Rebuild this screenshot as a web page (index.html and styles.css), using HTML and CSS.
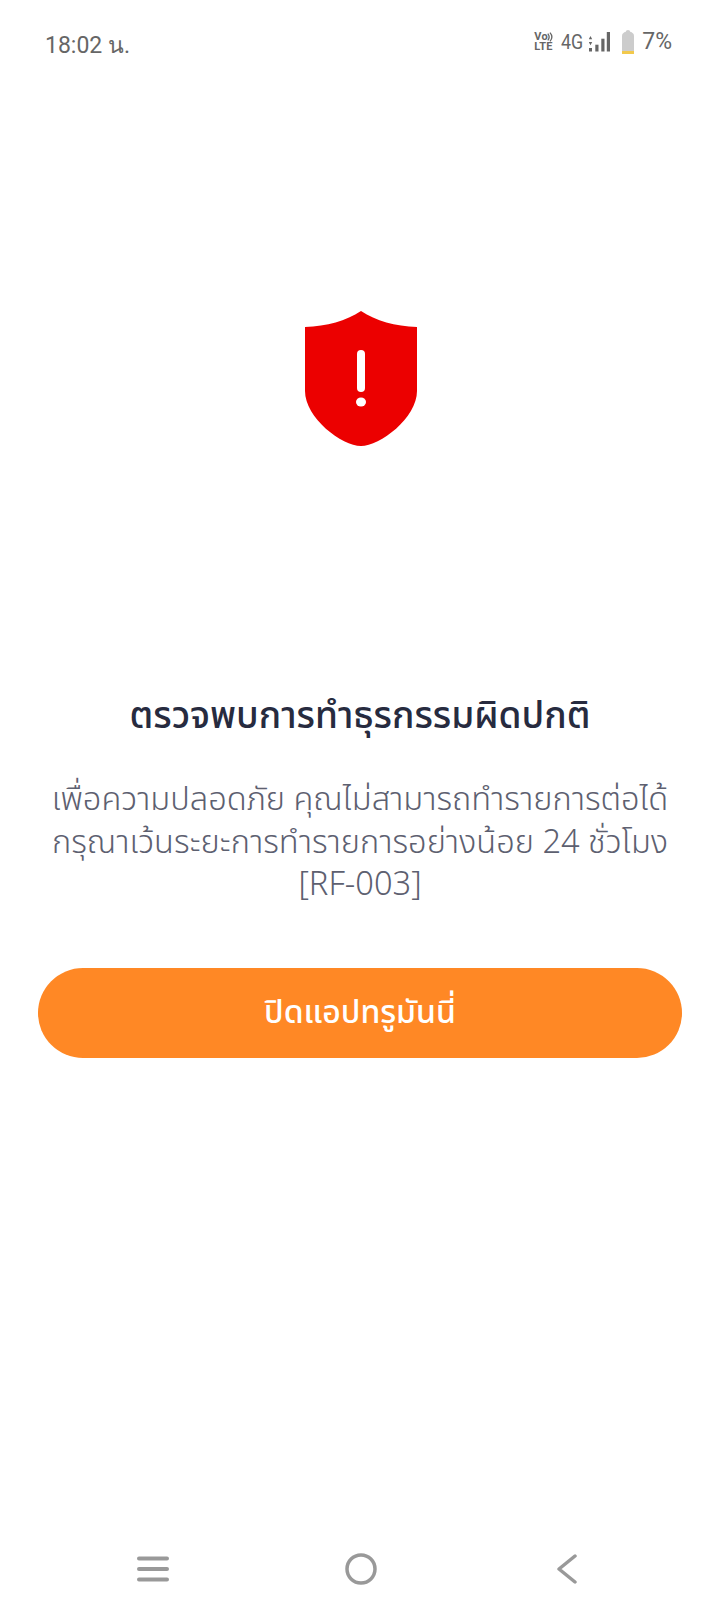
FILE: index.html
```html
<!DOCTYPE html>
<html lang="th">
<head>
<meta charset="utf-8">
<title>ตรวจพบการทำธุรกรรมผิดปกติ</title>
<link rel="stylesheet" href="styles.css">
</head>
<body>
<div class="screen">
  <header class="status">
    <span class="clock">18:02 น.</span>
    <div class="status-right">
      <span class="volte">Vo<br>LTE
        <svg class="volte-waves" width="6" height="10" viewBox="0 0 6 10"><path d="M0.8 1.6C2.4 3.600 2.400 6.400 0.8 8.400M3 0.6C5.400 3.400 5.400 6.600 3 9.400" fill="none" stroke="#666" stroke-width="1.300"/></svg>
      </span>
      <span class="net">4G</span>
      <svg class="signal" width="21" height="20" viewBox="0 0 21 20">
        <path d="M1.500 4 3.200 7.200H-.2ZM1.500 13.200 3.200 10H-.2Z" fill="#666"/>
        <rect x="0" y="16" width="3" height="3.500" fill="#666"/>
        <rect x="6.300" y="12.700" width="3.200" height="6.800" fill="#666"/>
        <rect x="12.300" y="6.700" width="3.200" height="12.800" fill="#666"/>
        <rect x="17.800" y="0" width="3.200" height="19.500" fill="#666"/>
      </svg>
      <svg class="battery" width="12" height="24" viewBox="0 0 12 24">
        <path d="M1.500 3Q2 2 3.500 2Q4 0 6 0T8.500 2Q10 2 10.500 3 12 3.500 12 6V24H0V6Q0 3.500 1.500 3Z" fill="#ccc"/>
        <rect x="0" y="21" width="12" height="3" fill="#f2c94c"/>
      </svg>
      <span class="percent">7%</span>
    </div>
  </header>

  <main class="content">
    <svg class="shield" width="112" height="135" viewBox="0 0 112 135">
      <path d="M56 0C41 10 22 15 0 16V80C0 107 37 135 56 135C75 135 112 107 112 80V16C90 15 71 10 56 0Z" fill="#ec0000"/>
      <rect x="52" y="39" width="8" height="42" rx="4" fill="#fff"/>
      <ellipse cx="56" cy="91" rx="5" ry="4.500" fill="#fff"/>
    </svg>
    <h1 class="title">ตรวจพบการทำธุรกรรมผิดปกติ</h1>
    <p class="message">เพื่อความปลอดภัย คุณไม่สามารถทำรายการต่อได้<br>กรุณาเว้นระยะการทำรายการอย่างน้อย 24 ชั่วโมง<br>[RF-003]</p>
    <button class="action" type="button">ปิดแอปทรูมันนี่</button>
  </main>

  <nav class="navbar">
    <svg class="nav-menu" width="32" height="26" viewBox="0 0 32 26"><path d="M2 2.500H30M2 13H30M2 23.500H30" stroke="#999" stroke-width="4" stroke-linecap="round"/></svg>
    <svg class="nav-home" width="32" height="32" viewBox="0 0 32 32"><circle cx="16" cy="16" r="14" fill="none" stroke="#999" stroke-width="3.500"/></svg>
    <svg class="nav-back" width="20" height="30" viewBox="0 0 20 30"><path d="M18 2 2 15 18 28" fill="none" stroke="#999" stroke-width="3.500" stroke-linecap="round" stroke-linejoin="round"/></svg>
  </nav>
</div>
</body>
</html>
```
FILE: styles.css
```css
* { box-sizing: border-box; }
html, body { margin: 0; padding: 0; background: #fff; }
body { font-family: "Noto Sans Thai", "Noto Sans", Roboto, "DejaVu Sans", sans-serif; }
.screen { width: 720px; height: 1608px; display: flex; flex-direction: column; }
.status { height: 72px; padding: 26px 48px 0 45px; display: flex; justify-content: space-between; align-items: flex-start; color: #666; }
.clock { font: 23px/38px Roboto, "DejaVu Sans", sans-serif; margin-top: 1px; }
.status-right { display: flex; align-items: center; height: 30px; margin-top: 1px; }
.volte { width: 19px; height: 20px; position: relative; display: block; font: 700 11px/10px Roboto, sans-serif; letter-spacing: .3px; margin-right: 8px; }
.volte-waves { position: absolute; right: 0; top: 0; }
.net { font: 21px/30px Roboto, sans-serif; transform: scaleX(.85); transform-origin: left center; width: 20px; margin-right: 8px; }
.signal { margin-right: 12px; }
.battery { margin-right: 8px; }
.percent { font: 23px/30px Roboto, sans-serif; }
.content { flex: 1; display: flex; flex-direction: column; align-items: center; padding: 239px 38px 0; }
.shield { margin-left: 2px; }
.title { margin: 244px 0 0; font-size: 37px; line-height: 54px; font-weight: 500; color: #272b3f; text-align: center; }
.message { margin: 35px 0 0; font-size: 32.600px; font-weight: 300; line-height: 42.500px; color: #5d6070; text-align: center; white-space: nowrap; }
.action { margin-top: 61px; width: 644px; height: 90px; border: 0; border-radius: 45px; background: #ff8825; color: #fff; font: inherit; font-size: 32px; font-weight: 500; }
.navbar { height: 88px; display: flex; align-items: center; padding: 10px 0 0 137px; }
.nav-home { margin-left: 176px; }
.nav-back { margin-left: 180px; }
```
